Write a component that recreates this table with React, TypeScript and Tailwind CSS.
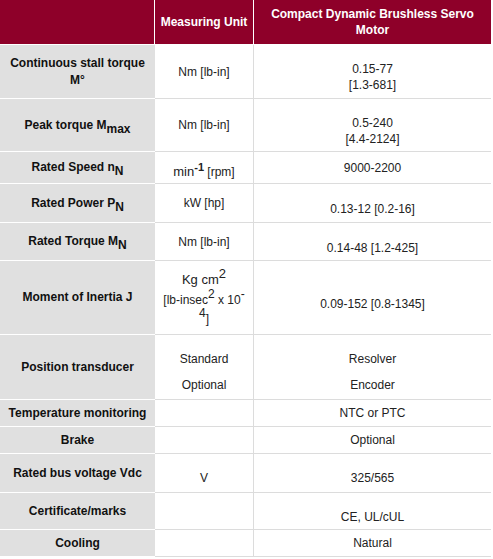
import type { ReactNode } from "react";

// Spec sheet table for the servo motor range.
type RowProps = {
  h: string;
  label: ReactNode;
  unit?: ReactNode;
  value: ReactNode;
  unitCls?: string;
  valueCls?: string;
};

function Sub({ children }: { children: ReactNode }) {
  return <span className="relative top-[4px]">{children}</span>;
}

function Sup({ children }: { children: ReactNode }) {
  return <span className="relative -top-[6px]">{children}</span>;
}

function Row({ h, label, unit, value, unitCls = "", valueCls = "" }: RowProps) {
  return (
    <div className={`flex ${h}`}>
      <div className="flex w-[155px] shrink-0 items-center justify-center border-b border-white bg-[#e0e0e0] px-2 text-center text-[12px] font-bold leading-[17px] text-[#111]">
        <div>{label}</div>
      </div>
      <div
        className={`flex w-[99px] shrink-0 items-center justify-center border-r border-b border-[#dcdcdc] px-[5px] text-center text-[12px] leading-[16px] text-[#222] ${unitCls}`}
      >
        <div>{unit}</div>
      </div>
      <div
        className={`flex w-[237px] shrink-0 items-center justify-center border-b border-[#dcdcdc] text-center text-[12px] leading-[16px] text-[#222] ${valueCls}`}
      >
        <div>{value}</div>
      </div>
    </div>
  );
}

export default function App() {
  return (
    <div className="min-h-screen bg-white font-['Liberation_Sans',Arial,sans-serif]">
      <div className="w-[491px]">
        {/* Header */}
        <div className="flex h-[45px] border-b border-white bg-[#8e0029] text-[12px] font-bold leading-[16px] text-white">
          <div className="w-[155px] shrink-0 border-r border-white" />
          <div className="flex w-[99px] shrink-0 items-center justify-center border-r border-white text-center">
            Measuring Unit
          </div>
          <div className="flex w-[237px] shrink-0 items-center justify-center px-3 text-center">
            Compact Dynamic Brushless Servo Motor
          </div>
        </div>

        <Row
          h="h-[54px]"
          label={
            <>
              Continuous stall torque
              <br />
              M°
            </>
          }
          unit="Nm [lb-in]"
          value={
            <>
              0.15-77
              <br />
              [1.3-681]
            </>
          }
          valueCls="pt-[11px]"
        />
        <Row
          h="h-[53px]"
          label={
            <>
              Peak torque M<Sub>max</Sub>
            </>
          }
          unit="Nm [lb-in]"
          value={
            <>
              0.5-240
              <br />
              [4.4-2124]
            </>
          }
          valueCls="pt-[12px]"
        />
        <Row
          h="h-[32px]"
          label={
            <>
              Rated Speed n<Sub>N</Sub>
            </>
          }
          unit={
            <>
              <span className="text-[13px]">min</span>
              <span className="relative -top-[5px] text-[11px] font-bold">-1</span>{" "}
              <span className="text-[12px]">[rpm]</span>
            </>
          }
          unitCls="pt-[8px]"
          value="9000-2200"
        />
        <Row
          h="h-[39px]"
          label={
            <>
              Rated Power P<Sub>N</Sub>
            </>
          }
          unit="kW [hp]"
          value="0.13-12 [0.2-16]"
          valueCls="pt-[12px]"
        />
        <Row
          h="h-[38px]"
          label={
            <>
              Rated Torque M<Sub>N</Sub>
            </>
          }
          unit="Nm [lb-in]"
          value="0.14-48 [1.2-425]"
          valueCls="pt-[12px]"
        />
        <Row
          h="h-[74px]"
          label="Moment of Inertia J"
          unit={
            <div className="text-[13px] leading-[20px]">
              <div>
                Kg cm<Sup>2</Sup>
              </div>
              <div className="text-[12px]">
                [lb-insec<Sup>2</Sup> x 10<Sup>-</Sup>
              </div>
              <div className="text-[12px] leading-[18px]">
                <Sup>4</Sup>]
              </div>
            </div>
          }
          unitCls="pt-[2px]"
          value="0.09-152 [0.8-1345]"
          valueCls="pt-[12px]"
        />
        <Row
          h="h-[65px]"
          label="Position transducer"
          unit={
            <div className="flex flex-col gap-[10px]">
              <span>Standard</span>
              <span>Optional</span>
            </div>
          }
          unitCls="pt-[10px]"
          value={
            <div className="flex flex-col gap-[10px]">
              <span>Resolver</span>
              <span>Encoder</span>
            </div>
          }
          valueCls="pt-[10px]"
        />
        <Row h="h-[27px]" label="Temperature monitoring" value="NTC or PTC" />
        <Row h="h-[27px]" label="Brake" value="Optional" />
        <Row
          h="h-[39px]"
          label="Rated bus voltage Vdc"
          unit="V"
          unitCls="pt-[10px]"
          value="325/565"
          valueCls="pt-[10px]"
        />
        <Row
          h="h-[37px]"
          label="Certificate/marks"
          value="CE, UL/cUL"
          valueCls="pt-[12px]"
        />
        <Row h="h-[27px]" label="Cooling" value="Natural" />
      </div>
    </div>
  );
}
